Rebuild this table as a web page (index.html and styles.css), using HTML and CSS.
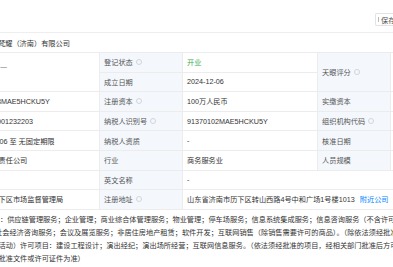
FILE: index.html
```html
<!DOCTYPE html>
<html lang="zh-CN">
<head>
<meta charset="utf-8">
<title>工商信息</title>
<link rel="stylesheet" href="styles.css">
</head>
<body>
<div class="page">
  <div class="topbar">
    <div class="btn"><span class="btn-ico"></span><span>保存</span></div>
  </div>
  <div class="name-row"><span class="name">梵耀（济南）有限公司</span></div>
  <div class="grid">
    <div class="cell val c1 span2"><span class="dash">一</span></div>
    <div class="cell lab">登记状态<i class="q"></i></div>
    <div class="cell val green">开业</div>
    <div class="cell lab span2">天眼评分<i class="q"></i></div>
    <div class="cell val span2 extra"></div>

    <div class="cell lab">成立日期</div>
    <div class="cell val">2024-12-06</div>

    <div class="cell val c1"><span class="cut">3MAE5HCKU5Y</span></div>
    <div class="cell lab">注册资本<i class="q"></i></div>
    <div class="cell val">100万人民币</div>
    <div class="cell lab">实缴资本</div>
    <div class="cell val extra"></div>

    <div class="cell val c1"><span class="cut">001232203</span></div>
    <div class="cell lab">纳税人识别号<i class="q"></i></div>
    <div class="cell val">91370102MAE5HCKU5Y</div>
    <div class="cell lab">组织机构代码<i class="q"></i></div>
    <div class="cell val extra"></div>

    <div class="cell val c1"><span class="cut">-06 至 无固定期限</span></div>
    <div class="cell lab">纳税人资质</div>
    <div class="cell val">-</div>
    <div class="cell lab">核准日期</div>
    <div class="cell val extra"></div>

    <div class="cell val c1"><span class="cut1">责任公司</span></div>
    <div class="cell lab">行业</div>
    <div class="cell val">商务服务业</div>
    <div class="cell lab">人员规模</div>
    <div class="cell val extra"></div>

    <div class="cell val c1"></div>
    <div class="cell lab">英文名称</div>
    <div class="cell val wide">-</div>

    <div class="cell val c1"><span class="cut1">下区市场监督管理局</span></div>
    <div class="cell lab">注册地址<i class="q"></i></div>
    <div class="cell val wide">山东省济南市历下区转山西路4号中和广场1号楼1013<a class="link">附近公司</a></div>
  </div>
  <div class="scope">
    <div class="line"><span class="cut2">项目：供应链管理服务；企业管理；商业综合体管理服务；物业管理；停车场服务；信息系统集成服务；信息咨询服务（不含许可类信息咨询服务）；</span></div>
    <div class="line"><span class="cut2">社会经济咨询服务；会议及展览服务；非居住房地产租赁；软件开发；互联网销售（除销售需要许可的商品）。（除依法须经批准的项目外，</span></div>
    <div class="line"><span class="cut2">活动）许可项目：建设工程设计；演出经纪；演出场所经营；互联网信息服务。（依法须经批准的项目，经相关部门批准后方可开展经营活动，</span></div>
    <div class="line"><span class="cut2">批准文件或许可证件为准）</span></div>
  </div>
</div>
</body>
</html>
```
FILE: styles.css
```css
* { box-sizing: border-box; margin: 0; padding: 0; }
html, body { width: 393px; height: 267px; overflow: hidden; background: #fff; }
body {
  font-family: "Liberation Sans", "Noto Sans CJK SC", sans-serif;
  font-size: 7.2px;
  color: #333;
}
.page { width: 393px; overflow: hidden; }

.topbar {
  height: 32px;
  display: flex;
  justify-content: flex-end;
  align-items: flex-start;
  padding-top: 13px;
}
.btn {
  width: 18px;
  height: 13px;
  border: 1px solid #e3e3e3;
  border-right: none;
  border-radius: 2px 0 0 2px;
  display: flex;
  align-items: center;
  gap: 1px;
  padding-left: 2px;
  color: #555;
  white-space: nowrap;
  overflow: hidden;
}
.btn-ico {
  width: 1px;
  height: 5px;
  background: #bbb;
  flex: none;
  margin-right: 1px;
}

.name-row {
  height: 20px;
  border-top: 1px solid #eeeeee;
  display: flex;
  align-items: center;
  overflow: hidden;
  color: #333;
}
.name { margin-left: -2px; white-space: nowrap; }

.grid {
  width: 420px;
  display: grid;
  grid-template-columns: 100px 83px 135px 73px 29px;
  grid-auto-rows: 19.6px;
  border-top: 1px solid #ececec;
}
.cell {
  border-bottom: 1px solid #ececec;
  border-right: 1px solid #ececec;
  display: flex;
  align-items: center;
  padding-left: 4px;
  white-space: nowrap;
  overflow: hidden;
}
.lab { background: #f4f8fd; color: #555; }
.val { background: #fff; color: #333; }
.c1 { padding-left: 0; }
.span2 { grid-row: span 2; }
.wide { grid-column: 3 / -1; }
.green { color: #3aad57; }
.extra { border-right: none; }
.cut { margin-left: -3px; }
.cut1 { margin-left: -1.5px; }
.dash { align-self: flex-start; margin-top: 9px; color: #888; }

.q {
  display: inline-block;
  width: 6px;
  height: 6px;
  margin-left: 3px;
  border: 1px solid #d2d6dc;
  border-radius: 50%;
}
.link { color: #0084ff; margin-left: 5px; text-decoration: none; }

.scope {
  padding-top: 3px;
  line-height: 13px;
  color: #333;
}
.line { white-space: nowrap; overflow: hidden; }
.cut2 { display: inline-block; }
.line:nth-child(1) .cut2 { margin-left: -14.4px; }
.line:nth-child(2) .cut2 { margin-left: -5px; }
.line:nth-child(3) .cut2 { margin-left: -1.5px; }
.line:nth-child(4) .cut2 { margin-left: -1.5px; }
```
